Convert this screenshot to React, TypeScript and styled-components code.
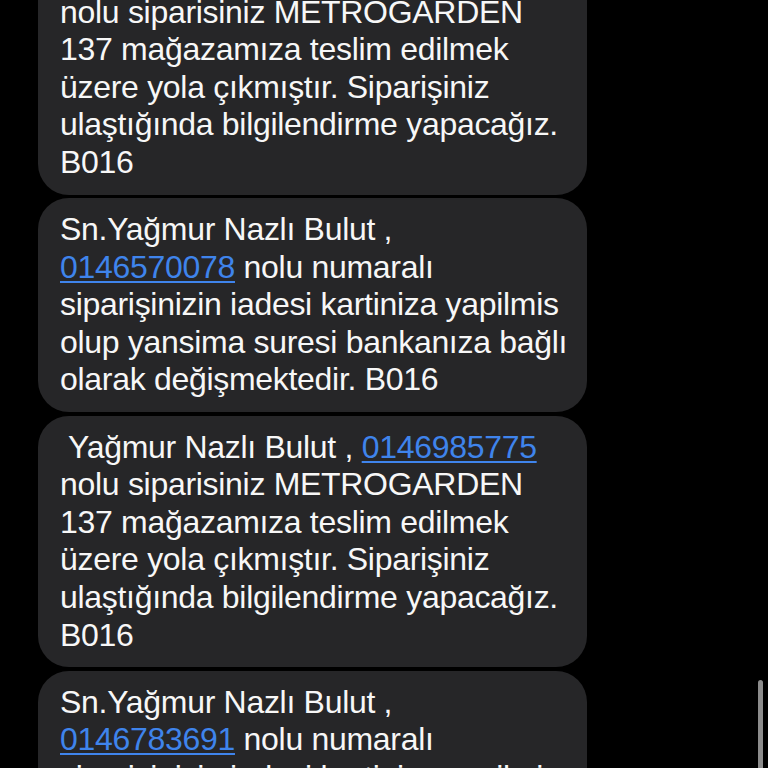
import React from 'react';
import styled, {createGlobalStyle} from "styled-components";

const GlobalStyle = createGlobalStyle`
  html, body {
    margin: 0;
    padding: 0;
    background: #000;
    height: 100%;
    overflow: hidden;
  }
`

type Part = string | { link: string }

interface MessageData {
    lines: Part[][]
}

const delivery = (orderNo: string): MessageData => ({
    lines: [
        [' Yağmur Nazlı Bulut , ', {link: orderNo}],
        ['nolu siparisiniz METROGARDEN'],
        ['137 mağazamıza teslim edilmek'],
        ['üzere yola çıkmıştır. Siparişiniz'],
        ['ulaştığında bilgilendirme yapacağız.'],
        ['B016'],
    ]
})

const refund = (orderNo: string): MessageData => ({
    lines: [
        ['Sn.Yağmur Nazlı Bulut ,'],
        [{link: orderNo}, ' nolu numaralı'],
        ['siparişinizin iadesi kartiniza yapilmis'],
        ['olup yansima suresi bankanıza bağlı'],
        ['olarak değişmektedir. B016'],
    ]
})

const messages: MessageData[] = [
    delivery('0146612254'),
    refund('0146570078'),
    delivery('0146985775'),
    refund('0146783691'),
]

const App: React.FC = () => {
    return (
        <Screen>
            <GlobalStyle/>
            <Thread>
                {messages.map((msg, i) => (
                    <Bubble key={i}>
                        {msg.lines.map((line, j) => (
                            <Line key={j}>
                                {line.map((part, k) =>
                                    typeof part === 'string'
                                        ? <React.Fragment key={k}>{part}</React.Fragment>
                                        : <Link key={k}>{part.link}</Link>
                                )}
                            </Line>
                        ))}
                    </Bubble>
                ))}
            </Thread>
            <ScrollThumb/>
        </Screen>
    );
};

const Screen = styled.div`
  position: relative;
  width: 768px;
  height: 768px;
  overflow: hidden;
  background: #000;
  font-family: "Liberation Sans", Arial, sans-serif;
`

const Thread = styled.div`
  display: flex;
  flex-direction: column;
  gap: 3.5px;
  margin-top: -57px;
  padding-left: 38px;
`

const Bubble = styled.div`
  width: 549px;
  box-sizing: border-box;
  padding: 13px 22px;
  background: #262628;
  border-radius: 31px;
  color: #f7f7f7;
  font-size: 32px;
  letter-spacing: -0.3px;
  line-height: 37.6px;
`

const Line = styled.div`
  white-space: pre;
`

const Link = styled.span`
  color: #3f84ec;
  text-decoration: underline;
  text-decoration-thickness: 2px;
  text-underline-offset: 3px;
`

const ScrollThumb = styled.div`
  position: absolute;
  right: 5px;
  top: 680px;
  width: 5px;
  height: 100px;
  border-radius: 3px;
  background: #8c8c8c;
`

export default App;
